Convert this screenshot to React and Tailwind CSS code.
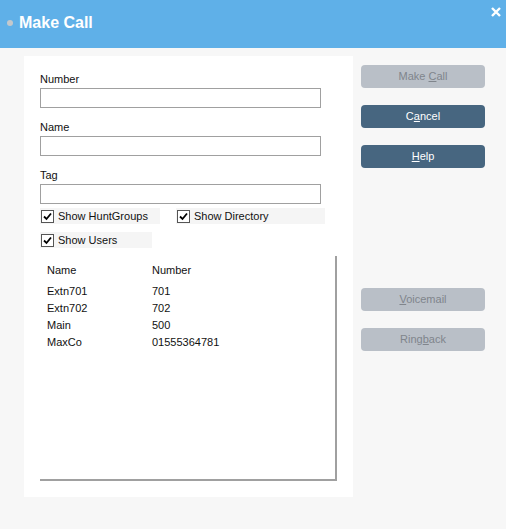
import React from 'react';

const font = { fontFamily: '"Liberation Sans", Arial, sans-serif' };

function Check({ label, className = '' }) {
  return (
    <label className={`flex items-center h-[16px] bg-[#f5f5f5] ${className}`}>
      <span className="w-[13px] h-[13px] border border-[#555] bg-white flex items-center justify-center mr-[4px] ml-[1px]">
        <svg width="9" height="9" viewBox="0 0 9 9">
          <path d="M1 4.5 L3.5 7 L8 1.5" stroke="#000" strokeWidth="1.8" fill="none" />
        </svg>
      </span>
      <span className="text-[11px] text-[#111]">{label}</span>
    </label>
  );
}

function Btn({ children, active, className = '' }) {
  return (
    <button
      className={`block w-[124px] h-[23px] rounded-[4px] text-[11px] ${active ? 'bg-[#476680] text-white' : 'bg-[#b9bfc7] text-[#80858c]'} ${className}`}
    >
      {children}
    </button>
  );
}

const entries = [
  ['Extn701', '701'],
  ['Extn702', '702'],
  ['Main', '500'],
  ['MaxCo', '01555364781'],
];

export default function App() {
  return (
    <div className="w-[506px] h-[529px] bg-[#f7f7f7] flex flex-col" style={font}>
      <div className="h-[48px] bg-[#5fb0e8] flex items-start relative shrink-0">
        <div className="flex items-center pt-[15px] pl-[7px]">
          <span className="w-[6px] h-[6px] rounded-full bg-[#c4c8cc] mr-[6px]" />
          <span className="text-white font-bold text-[16px] leading-[16px]">Make Call</span>
        </div>
        <svg className="absolute right-[5px] top-[7px]" width="10" height="10" viewBox="0 0 10 10">
          <path d="M1 1 L9 9 M9 1 L1 9" stroke="#fff" strokeWidth="2.4" />
        </svg>
      </div>

      <div className="flex pt-[8px] pl-[24px]">
        <div className="w-[329px] h-[441px] bg-white pt-[17px] pl-[16px]">
          <div className="text-[11px] text-[#111] leading-[13px]">Number</div>
          <div className="mt-[2px] w-[281px] h-[20px] border border-[#a0a0a0] bg-white" />
          <div className="mt-[13px] text-[11px] text-[#111] leading-[13px]">Name</div>
          <div className="mt-[2px] w-[281px] h-[20px] border border-[#a0a0a0] bg-white" />
          <div className="mt-[13px] text-[11px] text-[#111] leading-[13px]">Tag</div>
          <div className="mt-[2px] w-[281px] h-[20px] border border-[#a0a0a0] bg-white" />
          <div className="mt-[4px] flex">
            <Check label="Show HuntGroups" className="w-[120px]" />
            <Check label="Show Directory" className="w-[149px] ml-[16px]" />
          </div>
          <div className="mt-[8px] flex">
            <Check label="Show Users" className="w-[112px]" />
          </div>
          <div className="mt-[8px] w-[297px] h-[225px] border-r-2 border-b-2 border-[#a0a0a0] pt-[8px] pl-[7px] text-[11px] text-[#111]">
            <div className="flex leading-[13px]">
              <span className="w-[105px]">Name</span>
              <span>Number</span>
            </div>
            <div className="mt-[8px]">
              {entries.map(([n, num]) => (
                <div key={n} className="flex h-[17px] leading-[13px]">
                  <span className="w-[105px]">{n}</span>
                  <span>{num}</span>
                </div>
              ))}
            </div>
          </div>
        </div>

        <div className="ml-[8px] pt-[9px] flex flex-col">
          <Btn>Make <u>C</u>all</Btn>
          <Btn active className="mt-[17px]">C<u>a</u>ncel</Btn>
          <Btn active className="mt-[17px]"><u>H</u>elp</Btn>
          <Btn className="mt-[120px]"><u>V</u>oicemail</Btn>
          <Btn className="mt-[17px]">Ring<u>b</u>ack</Btn>
        </div>
      </div>
    </div>
  );
}
